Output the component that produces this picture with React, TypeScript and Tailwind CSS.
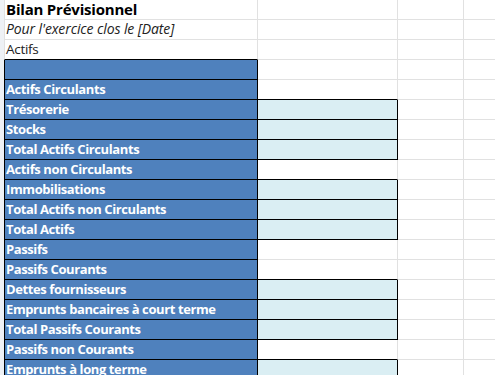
type Row = { label: string; kind: 'title' | 'italic' | 'plain' | 'blue'; value?: boolean };

const rows: Row[] = [
  { label: 'Bilan Prévisionnel', kind: 'title' },
  { label: "Pour l'exercice clos le [Date]", kind: 'italic' },
  { label: 'Actifs', kind: 'plain' },
  { label: '', kind: 'blue' },
  { label: 'Actifs Circulants', kind: 'blue' },
  { label: 'Trésorerie', kind: 'blue', value: true },
  { label: 'Stocks', kind: 'blue', value: true },
  { label: 'Total Actifs Circulants', kind: 'blue', value: true },
  { label: 'Actifs non Circulants', kind: 'blue' },
  { label: 'Immobilisations', kind: 'blue', value: true },
  { label: 'Total Actifs non Circulants', kind: 'blue', value: true },
  { label: 'Total Actifs', kind: 'blue', value: true },
  { label: 'Passifs', kind: 'blue' },
  { label: 'Passifs Courants', kind: 'blue' },
  { label: 'Dettes fournisseurs', kind: 'blue', value: true },
  { label: 'Emprunts bancaires à court terme', kind: 'blue', value: true },
  { label: 'Total Passifs Courants', kind: 'blue', value: true },
  { label: 'Passifs non Courants', kind: 'blue' },
  { label: 'Emprunts à long terme', kind: 'blue', value: true },
];

const App = () => {
  return (
    <div className="w-[495px] h-[375px] overflow-hidden bg-white font-['Open_Sans','Liberation_Sans',sans-serif]">
      <div className="grid grid-cols-[4px_254px_140px_66px_1fr]">
        {rows.map((r, i) => {
          const next = rows[i + 1];
          const blue = r.kind === 'blue';
          const aBottom = blue || next?.kind === 'blue' ? 'border-b-black' : 'border-b-[#e1e1e1]';
          const bBottom = r.value || next?.value ? 'border-b-black' : 'border-b-[#e1e1e1]';
          return (
            <div key={i} className="contents">
              {/* bord gauche */}
              <div className="h-[20px] bg-[#eef1f5]" />

              {/* colonne A */}
              <div
                className={`h-[20px] border-l border-r border-b flex items-end pl-px pb-[2px] whitespace-nowrap leading-[16px] ${aBottom} ${
                  blue
                    ? 'bg-[#4f81bd] border-l-black border-r-black text-white font-bold text-[13px] tracking-[-0.4px]'
                    : 'border-l-[#e1e1e1] border-r-[#e1e1e1] text-[#222]'
                } ${r.kind === 'title' ? 'font-bold text-[15px] tracking-[-0.2px] text-black' : ''} ${
                  r.kind === 'italic' ? 'italic text-[14px] tracking-[-0.1px]' : ''
                } ${r.kind === 'plain' ? 'text-[13.5px] tracking-[-0.3px]' : ''}`}
              >
                {r.label}
              </div>

              {/* colonne B */}
              <div
                className={`h-[20px] border-r border-b ${bBottom} ${
                  r.value ? 'bg-[#daeef3] border-r-black' : 'border-r-[#e1e1e1]'
                }`}
              />

              {/* colonnes C, D */}
              <div className="h-[20px] border-r border-b border-[#e1e1e1]" />
              <div className="h-[20px] border-b border-[#e1e1e1]" />
            </div>
          );
        })}
      </div>
    </div>
  );
};

export default App;
